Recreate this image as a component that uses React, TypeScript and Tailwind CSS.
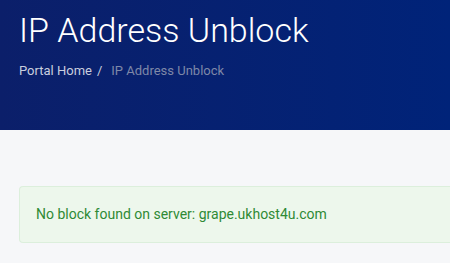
export default function App() {
  return (
    <div className="min-h-[263px] w-[450px] overflow-hidden bg-[#f6f7f9]" style={{ fontFamily: 'Roboto, "Liberation Sans", sans-serif' }}>
      <div className="h-[130px] bg-gradient-to-r from-[#0b1f6a] to-[#002379] px-[19px] pt-[9px]">
        <h1 className="text-[34px] font-light leading-[42px] text-white">IP Address Unblock</h1>
        <div className="mt-[12px] flex items-center text-[13px] leading-[16px]">
          <span className="text-[#c9cede]">Portal Home</span>
          <span className="pl-[5px] pr-[9px] text-[#c9cede]">/</span>
          <span className="text-[#7e88a8]">IP Address Unblock</span>
        </div>
      </div>
      <div className="pl-[19px] pt-[56px]">
        <div className="flex h-[57px] items-center rounded-l-[4px] border border-r-0 border-[#dcefdc] bg-[#edf7ec] pl-[16px]">
          <span className="text-[14px] text-[#2f8a35]">No block found on server: grape.ukhost4u.com</span>
        </div>
      </div>
    </div>
  );
}
